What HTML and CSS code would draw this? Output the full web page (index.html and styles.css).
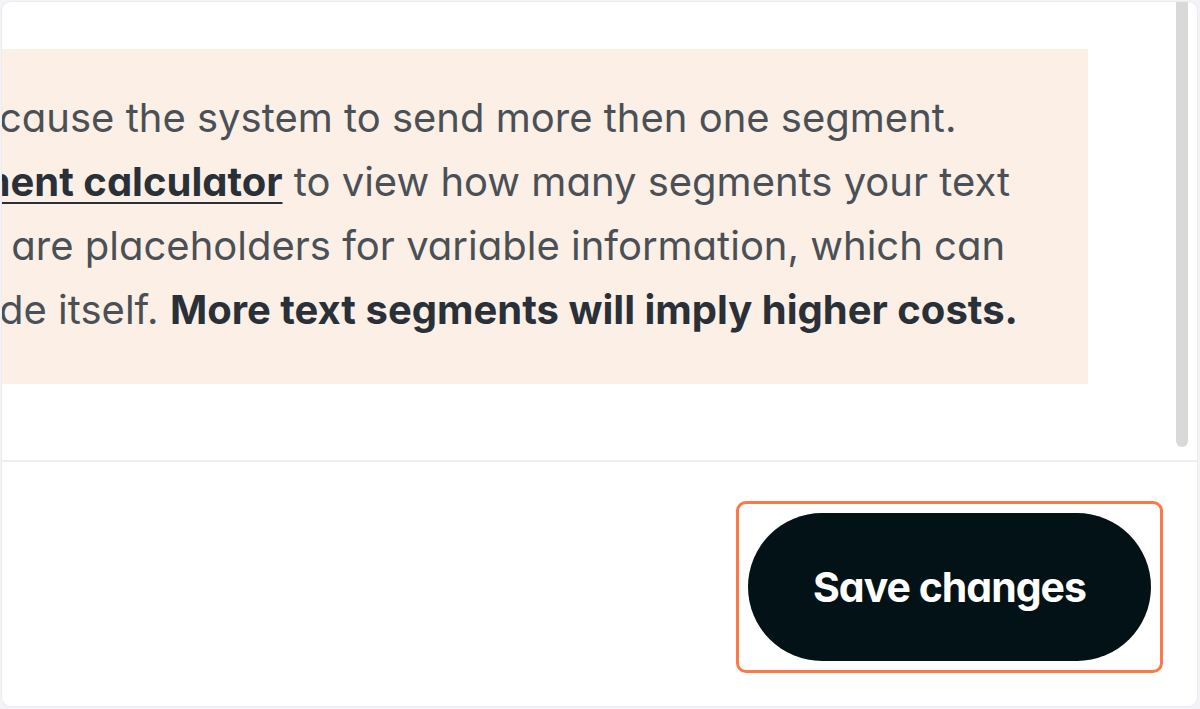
FILE: index.html
```html
<!DOCTYPE html>
<html lang="en">
<head>
<meta charset="utf-8">
<title>Message settings</title>
<link rel="stylesheet" href="styles.css">
</head>
<body>
  <div class="card">
    <div class="card-body">
      <div class="content">
        <div class="notice">
          <div class="line l1">cause the system to send more then one segment.</div>
          <div class="line l2"><a class="link" href="#">ment calculator</a> to view how many segments your text</div>
          <div class="line l3">s are placeholders for variable information, which can</div>
          <div class="line l4">de itself. <strong>More text segments will imply higher costs.</strong></div>
        </div>
      </div>
      <div class="scroll-track"><div class="scroll-thumb"></div></div>
    </div>
    <div class="card-footer">
      <span class="focus-ring"><button class="btn-save" type="button">Save changes</button></span>
    </div>
  </div>
</body>
</html>
```

FILE: styles.css
```css
html, body {
  margin: 0;
  padding: 0;
}
body {
  background: #f3f3f7;
  width: 1200px;
  height: 709px;
  overflow: hidden;
  font-family: Inter, "Noto Sans", sans-serif;
  font-feature-settings: "cv11" 1;
}
.card {
  margin: 1px 0 0 1px;
  width: 1197px;
  height: 706px;
  box-sizing: border-box;
  background: #ffffff;
  border: 1px solid #ebebf1;
  border-radius: 10px;
  overflow: hidden;
  display: flex;
  flex-direction: column;
}
.card-body {
  height: 458px;
  flex: none;
  display: flex;
  flex-direction: row;
}
.content {
  flex: 1;
  overflow: hidden;
  padding-top: 47px;
}
.notice {
  width: 1086px;
  background: #fcf0e6;
  box-sizing: border-box;
  padding: 37px 0 42px 0;
  color: #4b5057;
  font-size: 40px;
  line-height: 64px;
}
.line {
  white-space: nowrap;
}
.l1 { margin-left: -3px; }
.l2 { margin-left: -28px; }
.l3 { margin-left: -23px; }
.l4 { margin-left: -3px; }
.link {
  color: #2a3038;
  font-weight: 700;
  text-decoration: underline;
  text-decoration-thickness: 2px;
  text-underline-offset: 6px;
}
strong {
  color: #2a3038;
  font-weight: 700;
}
.scroll-track {
  width: 21px;
  flex: none;
  padding-right: 9px;
  box-sizing: border-box;
  display: flex;
  justify-content: flex-end;
}
.scroll-thumb {
  width: 12px;
  height: 445px;
  background: #d9d9d9;
  border-radius: 0 0 6px 6px;
}
.card-footer {
  flex: 1;
  border-top: 2px solid #eeeef1;
  display: flex;
  justify-content: flex-end;
  align-items: flex-start;
  padding: 39px 34px 0 0;
}
.focus-ring {
  display: inline-flex;
  padding: 9px;
  border: 3px solid #ff7744;
  border-radius: 10px;
}
.btn-save {
  width: 403px;
  height: 148px;
  border: none;
  border-radius: 74px;
  background: #021216;
  color: #ffffff;
  font-family: Inter, "Noto Sans", sans-serif;
  font-feature-settings: "cv11" 1;
  font-size: 41px;
  font-weight: 700;
  letter-spacing: -1px;
  cursor: pointer;
}
```
